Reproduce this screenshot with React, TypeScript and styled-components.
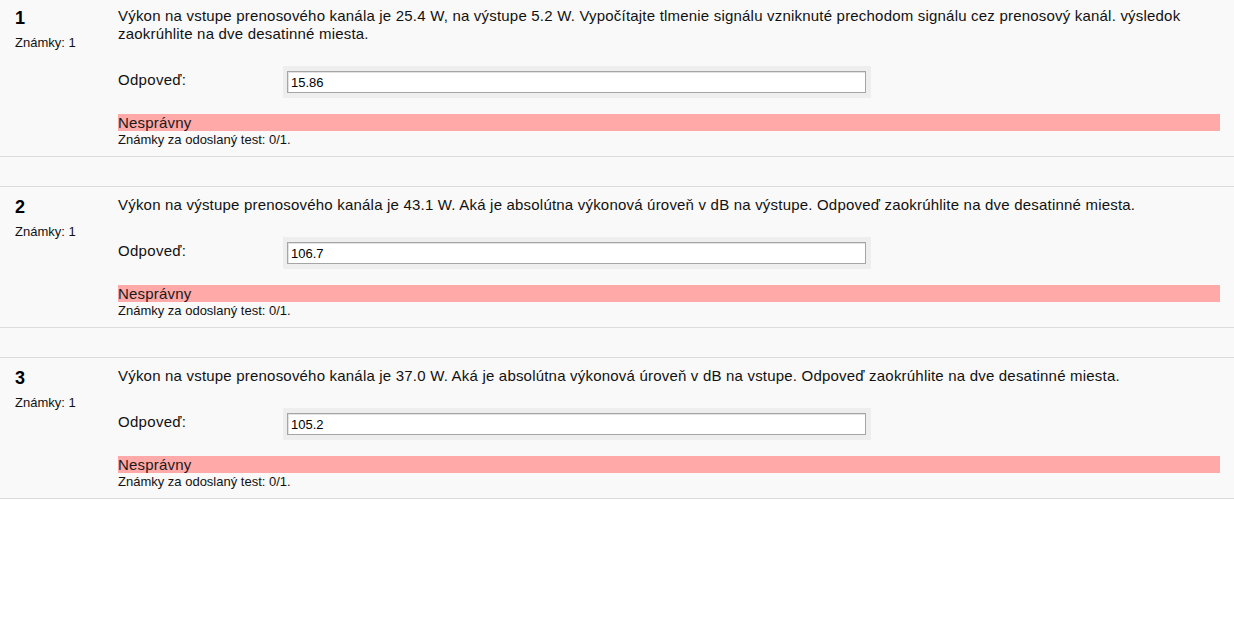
import React from "react";
import styled, { createGlobalStyle } from "styled-components";

const GlobalStyle = createGlobalStyle`
  html, body {
    margin: 0;
    padding: 0;
    background: #ffffff;
    font-family: "Liberation Sans", Arial, sans-serif;
    color: #000;
  }
`;

const Page = styled.div`
  margin-top: -3px;
  display: flex;
  flex-direction: column;
  gap: 29px;
  background: #f9f9f9;
`;

const Question = styled.div`
  display: flex;
  background: #f9f9f9;
  border-top: 1px solid #dcdcdc;
  border-bottom: 1px solid #dcdcdc;
  padding: 9px 14px 8px 15px;
`;

const Info = styled.div`
  width: 103px;
  flex-shrink: 0;
  display: flex;
  flex-direction: column;
`;

const Number = styled.div`
  font-size: 18px;
  line-height: 22px;
  font-weight: bold;
  color: #000;
`;

const Grade = styled.div`
  margin-top: 6px;
  font-size: 13px;
  line-height: 16px;
  color: #111;
`;

const Content = styled.div`
  flex: 1;
  display: flex;
  flex-direction: column;
`;

const Text = styled.div`
  font-size: 15px;
  letter-spacing: 0.2px;
  line-height: 18px;
  color: #111;
`;

const AnswerRow = styled.div`
  margin-top: 23px;
  display: flex;
  align-items: flex-start;
`;

const Label = styled.div`
  width: 165px;
  flex-shrink: 0;
  padding-top: 5px;
  font-size: 15px;
  letter-spacing: 0.3px;
  line-height: 18px;
  color: #111;
`;

const InputWrap = styled.div`
  background: #eeeeee;
  padding: 5px 5px 5px 4px;
  display: flex;
`;

const Input = styled.div`
  box-sizing: border-box;
  width: 579px;
  height: 22px;
  background: #fff;
  border: 1px solid #a5a5a5;
  box-shadow: inset 1px 1px 0 #e2e2e2;
  padding: 0 3px;
  font-size: 13px;
  line-height: 21px;
  color: #000;
`;

const Feedback = styled.div`
  margin-top: 16px;
  background: #ffa9a9;
  font-size: 15px;
  letter-spacing: 0.2px;
  line-height: 17px;
  color: #1a1a1a;
`;

const Mark = styled.div`
  font-size: 13px;
  line-height: 17px;
  color: #111;
`;

type Q = { n: number; text: string; answer: string };

const questions: Q[] = [
  {
    n: 1,
    text:
      "Výkon na vstupe prenosového kanála je 25.4 W, na výstupe 5.2 W. Vypočítajte tlmenie signálu vzniknuté prechodom signálu cez prenosový kanál. výsledok zaokrúhlite na dve desatinné miesta.",
    answer: "15.86",
  },
  {
    n: 2,
    text:
      "Výkon na výstupe prenosového kanála je 43.1 W. Aká je absolútna výkonová úroveň v dB na výstupe. Odpoveď zaokrúhlite na dve desatinné miesta.",
    answer: "106.7",
  },
  {
    n: 3,
    text:
      "Výkon na vstupe prenosového kanála je 37.0 W. Aká je absolútna výkonová úroveň v dB na vstupe. Odpoveď zaokrúhlite na dve desatinné miesta.",
    answer: "105.2",
  },
];

export default function App() {
  return (
    <>
      <GlobalStyle />
      <Page>
        {questions.map((q) => (
          <Question key={q.n}>
            <Info>
              <Number>{q.n}</Number>
              <Grade>Známky: 1</Grade>
            </Info>
            <Content>
              <Text>{q.text}</Text>
              <AnswerRow>
                <Label>Odpoveď:</Label>
                <InputWrap>
                  <Input>{q.answer}</Input>
                </InputWrap>
              </AnswerRow>
              <Feedback>Nesprávny</Feedback>
              <Mark>Známky za odoslaný test: 0/1.</Mark>
            </Content>
          </Question>
        ))}
      </Page>
    </>
  );
}
